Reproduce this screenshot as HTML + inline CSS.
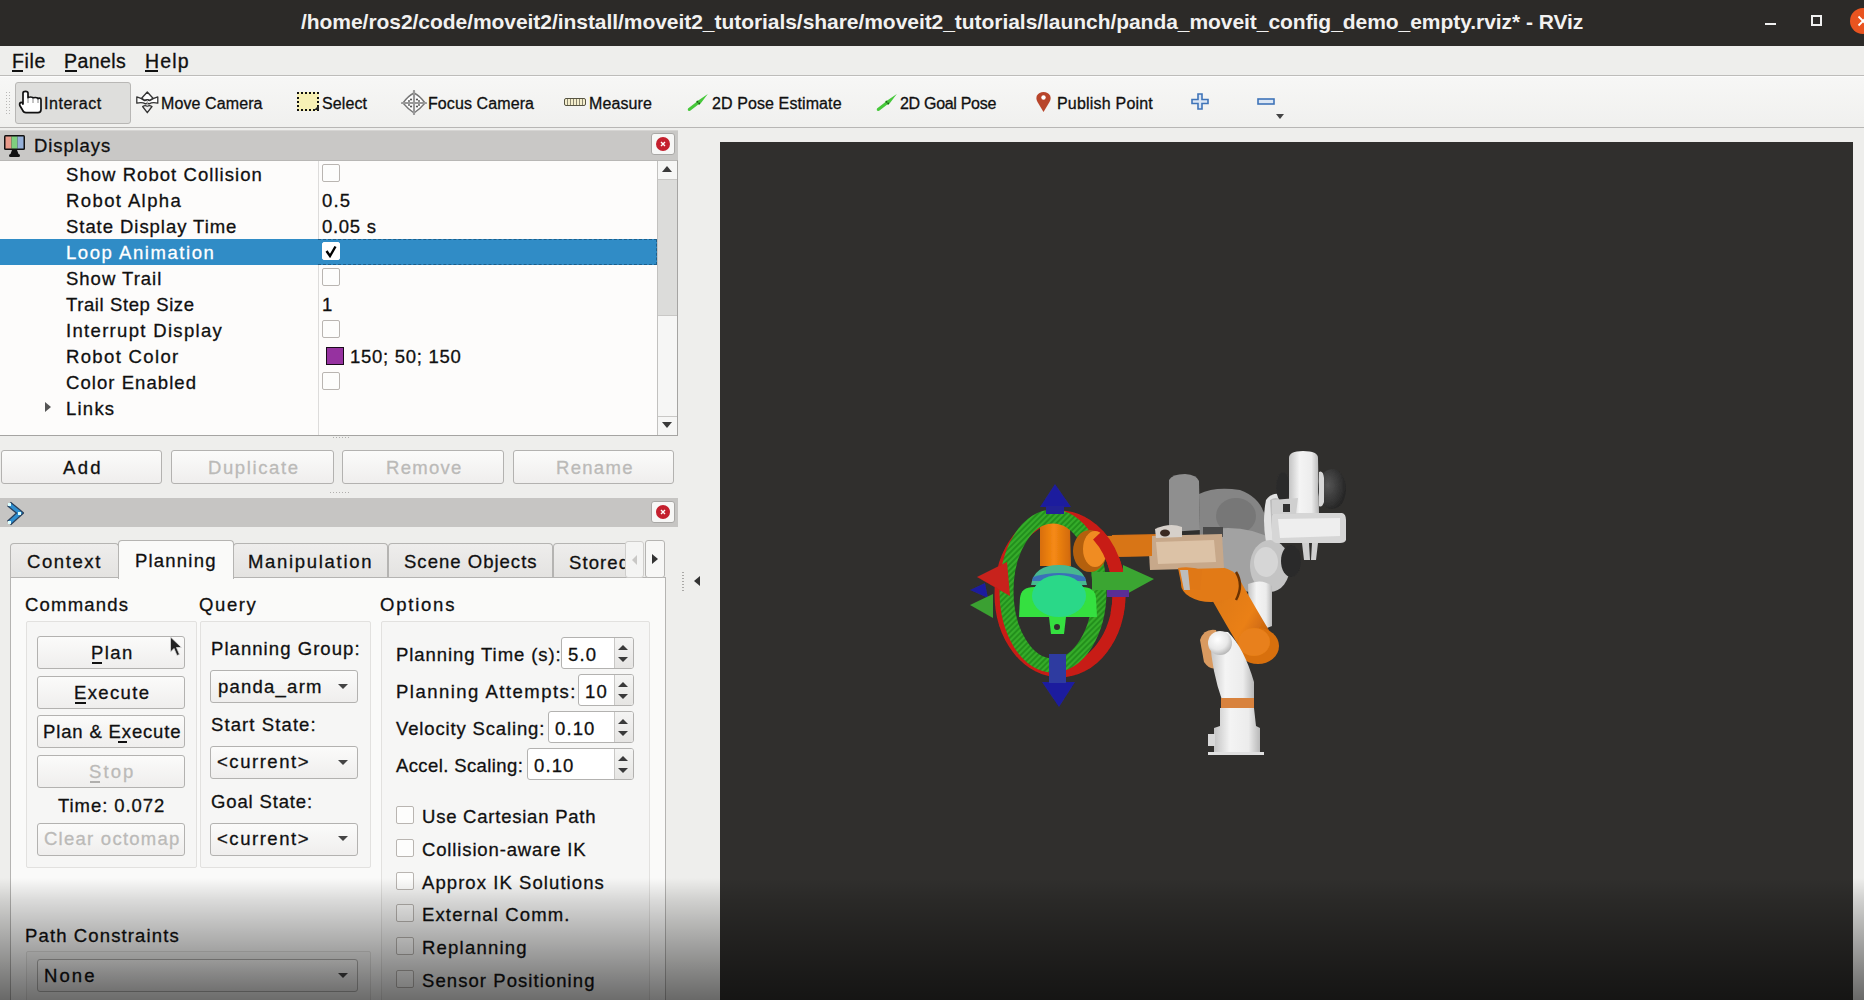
<!DOCTYPE html>
<html><head><meta charset="utf-8">
<style>
*{box-sizing:border-box;margin:0;padding:0}
html,body{width:1864px;height:1000px;overflow:hidden;background:#eeeeec;font-family:"Liberation Sans",sans-serif;color:#101010}
.a{position:absolute}
.t{position:absolute;white-space:pre;line-height:1;-webkit-text-stroke:0.3px currentColor}
#title{left:0;top:0;width:1864px;height:46px;background:#2c2a28}
#menubar{left:0;top:46px;width:1864px;height:30px;background:#eeeeec;border-bottom:1px solid #bdbcba}
#toolbar{left:0;top:76px;width:1864px;height:52px;background:linear-gradient(#f7f7f6,#f0f0ee);box-shadow:inset 0 1px #fcfcfc;border-bottom:1px solid #b7b6b4}
.m{font-size:19.5px}
.m u{text-decoration:none;border-bottom:2px solid #111;}
.tb{font-size:16px;letter-spacing:0.1px}
.btn{position:absolute;border:1px solid #b3b2b0;border-radius:3px;background:linear-gradient(#fbfbfa,#efeeed);}
.lbl{font-size:18.5px;letter-spacing:1.1px}
.cb{position:absolute;width:18px;height:18px;border:1px solid #b9b5b1;border-radius:2px;background:#fdfdfc}
.dis{color:#bbbab8}
</style></head><body>
<!-- title bar -->
<div id="title" class="a">
  <div class="t" style="left:301px;top:11px;font-size:21px;font-weight:bold;color:#f2f1f0;letter-spacing:-0.05px;-webkit-text-stroke:0">/home/ros2/code/moveit2/install/moveit2_tutorials/share/moveit2_tutorials/launch/panda_moveit_config_demo_empty.rviz* - RViz</div>
  <div class="a" style="left:1765px;top:23px;width:11px;height:2px;background:#f0f0f0"></div>
  <div class="a" style="left:1811px;top:15px;width:11px;height:11px;border:2px solid #f0f0f0"></div>
  <div class="a" style="left:1850px;top:8px;width:26px;height:26px;border-radius:13px;background:#e95420"></div><svg class="a" style="left:1857px;top:15px" width="12" height="12" viewBox="0 0 12 12"><path d="M1.5 1.5 L10.5 10.5 M10.5 1.5 L1.5 10.5" stroke="#fff" stroke-width="1.8"/></svg>
</div>
<!-- menubar -->
<div id="menubar" class="a">
  <div class="t m" style="left:12px;top:6px;letter-spacing:0.6px">File</div><div class="a" style="left:12px;top:24px;width:11px;height:2px;background:#111"></div>
  <div class="t m" style="left:64px;top:6px;letter-spacing:0.45px">Panels</div><div class="a" style="left:65px;top:24px;width:12px;height:2px;background:#111"></div>
  <div class="t m" style="left:145px;top:6px;letter-spacing:1.2px">Help</div><div class="a" style="left:145px;top:24px;width:13px;height:2px;background:#111"></div>
</div>
<!-- toolbar -->
<div id="toolbar" class="a">
  <div class="a" style="left:5px;top:15px;width:5px;height:23px;background-image:radial-gradient(circle,#b9b8b6 0.8px,transparent 1px);background-size:3px 3px"></div>
  <div class="a" style="left:15px;top:6px;width:116px;height:42px;border:1px solid #b8b7b5;border-radius:3px;background:#dededc"></div>
  <svg class="a" style="left:18px;top:90px;left:18px;top:14px" width="24" height="26" viewBox="0 0 24 26"><path d="M5 13 L5 3 Q5 1.3 7.5 1.3 Q10 1.3 10 3 L10 7.8 Q10 7 12.5 7 Q15 7 15 8 Q15 7.5 17.5 7.5 Q20 7.5 20 8.8 Q20 8.2 21.5 8.2 Q23 8.2 23 9.8 L23 19.5 Q23 22.7 20 22.7 L8 22.7 Q5.5 22.7 4.5 20 L1.8 15.5 Q1.2 13.2 2.6 12.6 Q4 12 5 14 Z" fill="#fff" stroke="#111" stroke-width="1.7" stroke-linejoin="round"/><path d="M10 8 L10 13 M15 8.5 L15 13 M20 9 L20 13" stroke="#888" stroke-width="1"/></svg>
  <div class="t tb" style="left:44px;top:20px;letter-spacing:0.54px">Interact</div>
  <svg class="a" style="left:136px;top:14px" width="24" height="24" viewBox="0 0 24 24" fill="#fff" stroke="#333" stroke-width="1.3" stroke-linejoin="round"><path d="M11.3 2 L5.6 8.3 Q8 9.6 8.6 10.6 Q11.3 8.8 14 10.6 Q14.6 9.6 17 8.3 Z"/><path d="M0.8 6.9 L0.8 13.2 Q6 11.6 9.5 13.9 Q11.3 12.6 13.1 13.9 Q16.6 11.6 21.8 13.2 L21.8 6.9 Q17.5 8 14 10.6 Q11.3 9.4 8.6 10.6 Q5 8 0.8 6.9 Z"/><path d="M6.6 16.5 L11.3 22.7 L16 16.5 Q13.5 15 11.3 16.2 Q9 15 6.6 16.5 Z" fill="#eee"/><path d="M11.3 10 L11.3 16" stroke="#aaa" stroke-width="1"/></svg>
  <div class="t tb" style="left:161px;top:20px">Move Camera</div>
  <div class="a" style="left:297px;top:16px;width:22px;height:19px;background:#f7f0b5;border:2px dotted #111"></div>
  <div class="a" style="left:314px;top:29px;width:0;height:0;border-left:5px solid transparent;border-bottom:5px solid #222"></div>
  <div class="t tb" style="left:322px;top:20px">Select</div>
  <svg class="a" style="left:401px;top:14px" width="26" height="25" viewBox="0 0 26 25"><path d="M13 3 Q19 6 24 13 Q19 19 13 23 Q7 19 2 13 Q7 6 13 3 Z" fill="#fff" stroke="#777" stroke-width="1.4"/><path d="M13 1 L13 24 M1 13 L25 13" stroke="#999" stroke-width="2.2" stroke-linecap="round"/><g fill="#555"><circle cx="10" cy="9.5" r="1.1"/><circle cx="16" cy="9.5" r="1.1"/><circle cx="10" cy="16.5" r="1.1"/><circle cx="16" cy="16.5" r="1.1"/><circle cx="8" cy="11" r="0.9"/><circle cx="18" cy="11" r="0.9"/><circle cx="8" cy="15" r="0.9"/><circle cx="18" cy="15" r="0.9"/></g></svg>
  <div class="t tb" style="left:428px;top:20px">Focus Camera</div>
  <div class="a" style="left:564px;top:22px;width:22px;height:8px;background:repeating-linear-gradient(90deg,#f4eecc 0 2px,#8a8670 2px 3px);border:1.5px solid #575442;border-radius:2px"></div>
  <div class="t tb" style="left:589px;top:20px">Measure</div>
  <svg class="a" style="left:686px;top:16px" width="24" height="20" viewBox="0 0 24 20"><path d="M2 16.5 Q1 19.5 4.2 18.8 L12 12.8 Q14.2 12.8 15.2 10.8 L21.8 2 L12.6 8.2 Q10.4 8.2 9.8 10.4 Z" fill="#46c83a"/><circle cx="11.5" cy="9.8" r="0.9" fill="#1c5a18"/><circle cx="13.2" cy="11.5" r="0.9" fill="#1c5a18"/></svg>
  <div class="t tb" style="left:712px;top:20px">2D Pose Estimate</div>
  <svg class="a" style="left:875px;top:16px" width="24" height="20" viewBox="0 0 24 20"><path d="M2 16.5 Q1 19.5 4.2 18.8 L12 12.8 Q14.2 12.8 15.2 10.8 L21.8 2 L12.6 8.2 Q10.4 8.2 9.8 10.4 Z" fill="#46c83a"/><circle cx="11.5" cy="9.8" r="0.9" fill="#1c5a18"/><circle cx="13.2" cy="11.5" r="0.9" fill="#1c5a18"/></svg>
  <div class="t tb" style="left:900px;top:20px;letter-spacing:-0.3px">2D Goal Pose</div>
  <svg class="a" style="left:1035px;top:15px" width="17" height="22" viewBox="0 0 17 22"><path d="M8.5 21 L2.5 11 Q0.5 7.5 2 4.5 Q4 1 8.5 1 Q13 1 15 4.5 Q16.5 7.5 14.5 11 Z" fill="#b8452a"/><circle cx="8.5" cy="6.5" r="2.2" fill="#fff"/></svg>
  <div class="t tb" style="left:1057px;top:20px;letter-spacing:0.2px">Publish Point</div>
  <svg class="a" style="left:1191px;top:17px" width="18" height="17" viewBox="0 0 18 17"><path d="M7 1 H11 V6.5 H17 V10.5 H11 V16 H7 V10.5 H1 V6.5 H7 Z" fill="#dbe6f4" stroke="#3f74b8" stroke-width="1.6"/></svg>
  <svg class="a" style="left:1257px;top:22px" width="18" height="8" viewBox="0 0 18 8"><rect x="1" y="1" width="16" height="5" fill="#dbe6f4" stroke="#3f74b8" stroke-width="1.6"/></svg>
  <div class="a" style="left:1276px;top:38px;width:0;height:0;border-left:4px solid transparent;border-right:4px solid transparent;border-top:5px solid #444"></div>
</div>
<!-- displays dock -->
<div class="a" style="left:0;top:130px;width:678px;height:31px;background:#c9c8c6;border-top:1px solid #d6d5d3"></div>
<svg class="a" style="left:3px;top:134px" width="23" height="24" viewBox="0 0 23 24"><rect x="1" y="1" width="21" height="15" rx="1.5" fill="#111"/><rect x="2.5" y="2.5" width="6" height="12" fill="#e99a8a"/><rect x="8.5" y="2.5" width="6" height="12" fill="#7fcf7f"/><rect x="14.5" y="2.5" width="6" height="12" fill="#95b0d8"/><path d="M9 16 L14 16 L15.5 20 L7.5 20 Z" fill="#111"/><rect x="6" y="20" width="11" height="3" rx="1.5" fill="#111"/></svg>
<div class="t lbl" style="left:34px;top:137px;letter-spacing:0.89px">Displays</div>
<div class="a" style="left:651px;top:133px;width:24px;height:22px;border:1px solid #a9a8a6;border-radius:3px;background:#f7f7f6"></div>
<div class="a" style="left:656px;top:137px;width:14px;height:14px;border-radius:7px;background:#c4202e"></div>
<svg class="a" style="left:659px;top:140px" width="8" height="8" viewBox="0 0 8 8"><path d="M2 2 L6 6 M6 2 L2 6" stroke="#fff" stroke-width="1.4"/></svg>
<div class="a" style="left:0;top:160px;width:678px;height:276px;background:#fdfcfb;border-top:1px solid #b8b7b5;border-bottom:1px solid #a5a4a2;border-right:1px solid #a5a4a2"></div>
<div class="a" style="left:318px;top:161px;width:1px;height:274px;background:#dddcdb"></div>
<div class="a" style="left:0;top:239px;width:657px;height:26px;background:#308cc6"></div>
<div class="a" style="left:318px;top:239px;width:339px;height:26px;border:1px dashed #1d5f8c;border-left:none"></div>
<div class="t lbl" style="left:66px;top:166px;color:#101010;letter-spacing:1.05px">Show Robot Collision</div>
<div class="cb" style="left:322px;top:164px"></div>
<div class="t lbl" style="left:66px;top:192px;color:#101010;letter-spacing:1.4px">Robot Alpha</div>
<div class="t lbl" style="left:322px;top:192px;letter-spacing:1.1px">0.5</div>
<div class="t lbl" style="left:66px;top:218px;color:#101010;letter-spacing:0.95px">State Display Time</div>
<div class="t lbl" style="left:322px;top:218px;letter-spacing:0.7px">0.05 s</div>
<div class="t lbl" style="left:66px;top:244px;color:#fff;letter-spacing:1.56px">Loop Animation</div>
<div class="cb" style="left:322px;top:242px;border-color:#fff;background:#fff"></div><svg class="a" style="left:324px;top:244px" width="14" height="14" viewBox="0 0 14 14"><path d="M2.5 7 L6 12 L11.5 2.5" fill="none" stroke="#000" stroke-width="2.4"/></svg>
<div class="t lbl" style="left:66px;top:270px;color:#101010;letter-spacing:0.99px">Show Trail</div>
<div class="cb" style="left:322px;top:268px"></div>
<div class="t lbl" style="left:66px;top:296px;color:#101010;letter-spacing:0.6px">Trail Step Size</div>
<div class="t lbl" style="left:322px;top:296px">1</div>
<div class="t lbl" style="left:66px;top:322px;color:#101010;letter-spacing:1.32px">Interrupt Display</div>
<div class="cb" style="left:322px;top:320px"></div>
<div class="t lbl" style="left:66px;top:348px;color:#101010;letter-spacing:1.35px">Robot Color</div>
<div class="a" style="left:326px;top:347px;width:18px;height:18px;background:#9632a0;border:1.5px solid #1a0a1a"></div>
<div class="t lbl" style="left:350px;top:348px;letter-spacing:0.71px">150; 50; 150</div>
<div class="t lbl" style="left:66px;top:374px;color:#101010;letter-spacing:1.06px">Color Enabled</div>
<div class="cb" style="left:322px;top:372px"></div>
<div class="t lbl" style="left:66px;top:400px;color:#101010;letter-spacing:1.23px">Links</div>
<div class="a" style="left:45px;top:402px;width:0;height:0;border-top:5px solid transparent;border-bottom:5px solid transparent;border-left:6px solid #555"></div>
<!-- scrollbar -->
<div class="a" style="left:657px;top:161px;width:20px;height:274px;background:#f6f6f5;border-left:1px solid #c2c1bf"></div>
<div class="a" style="left:658px;top:179px;width:19px;height:137px;background:#dcdcda;border-top:1px solid #c9c8c6;border-bottom:1px solid #c9c8c6"></div>
<div class="a" style="left:658px;top:416px;width:19px;height:1px;background:#c9c8c6"></div>
<div class="a" style="left:662px;top:166px;width:0;height:0;border-left:5px solid transparent;border-right:5px solid transparent;border-bottom:6px solid #3a3a3a"></div>
<div class="a" style="left:662px;top:422px;width:0;height:0;border-left:5px solid transparent;border-right:5px solid transparent;border-top:6px solid #3a3a3a"></div>
<div class="a" style="left:332px;top:436px;width:18px;height:3px;background-image:radial-gradient(circle,#b0afad 0.7px,transparent 0.9px);background-size:3px 3px"></div>
<!-- buttons -->
<div class="btn" style="left:1px;top:450px;width:161px;height:34px"></div>
<div class="t lbl" style="left:63px;top:459px;letter-spacing:2.3px">Add</div>
<div class="btn" style="left:171px;top:450px;width:163px;height:34px"></div>
<div class="t lbl dis" style="left:208px;top:459px;letter-spacing:1.6px">Duplicate</div>
<div class="btn" style="left:342px;top:450px;width:162px;height:34px"></div>
<div class="t lbl dis" style="left:386px;top:459px;letter-spacing:1.3px">Remove</div>
<div class="btn" style="left:513px;top:450px;width:161px;height:34px"></div>
<div class="t lbl dis" style="left:556px;top:459px;letter-spacing:1.3px">Rename</div>
<div class="a" style="left:329px;top:491px;width:22px;height:3px;background-image:radial-gradient(circle,#b0afad 0.7px,transparent 0.9px);background-size:3px 3px"></div>
<!-- motion planning dock -->
<div class="a" style="left:0;top:498px;width:678px;height:29px;background:#c6c5c3"></div>
<svg class="a" style="left:6px;top:501px" width="18" height="25" viewBox="0 0 18 25"><path d="M3 3 L14 12 L3 22" fill="none" stroke="#2a3f5a" stroke-width="6" stroke-linejoin="miter"/><path d="M3 3 L14 12 L3 22" fill="none" stroke="#2f8fd0" stroke-width="3.5"/><rect x="2" y="2" width="3" height="3" fill="#dff"/><rect x="2" y="20" width="3" height="3" fill="#dff"/><rect x="12" y="11" width="3" height="3" fill="#dff"/></svg>
<div class="a" style="left:651px;top:501px;width:24px;height:22px;border:1px solid #a9a8a6;border-radius:3px;background:#f7f7f6"></div>
<div class="a" style="left:656px;top:505px;width:14px;height:14px;border-radius:7px;background:#c4202e"></div>
<svg class="a" style="left:659px;top:508px" width="8" height="8" viewBox="0 0 8 8"><path d="M2 2 L6 6 M6 2 L2 6" stroke="#fff" stroke-width="1.4"/></svg>
<!-- tabs -->
<div class="a" style="left:10px;top:577px;width:656px;height:430px;background:#fafaf9;border:1px solid #b5b4b2"></div>
<div class="a" style="left:10px;top:543px;width:109px;height:34px;background:linear-gradient(#eeedec,#e4e3e1);border:1px solid #b5b4b2;border-bottom:none;border-radius:4px 4px 0 0"></div>
<div class="a" style="left:233px;top:543px;width:155px;height:34px;background:linear-gradient(#eeedec,#e4e3e1);border:1px solid #b5b4b2;border-bottom:none;border-radius:4px 4px 0 0"></div>
<div class="a" style="left:388px;top:543px;width:165px;height:34px;background:linear-gradient(#eeedec,#e4e3e1);border:1px solid #b5b4b2;border-bottom:none;border-radius:4px 4px 0 0"></div>
<div class="a" style="left:553px;top:543px;width:90px;height:34px;background:linear-gradient(#eeedec,#e4e3e1);border:1px solid #b5b4b2;border-bottom:none;border-radius:4px 4px 0 0;overflow:hidden"><div class="t lbl" style="left:15px;top:10px">Stored</div></div>
<div class="a" style="left:118px;top:540px;width:116px;height:39px;background:#fafaf9;border:1px solid #b5b4b2;border-bottom:none;border-radius:4px 4px 0 0"></div>
<div class="t lbl" style="left:27px;top:553px;letter-spacing:1.6px">Context</div>
<div class="t lbl" style="left:135px;top:552px;letter-spacing:1.21px">Planning</div>
<div class="t lbl" style="left:248px;top:553px;letter-spacing:1.69px">Manipulation</div>
<div class="t lbl" style="left:404px;top:553px;letter-spacing:1.02px">Scene Objects</div>
<div class="a" style="left:625px;top:541px;width:19px;height:37px;background:#f4f4f3;border:1px solid #cfcecc;border-radius:3px"></div>
<div class="a" style="left:632px;top:555px;width:0;height:0;border-top:5px solid transparent;border-bottom:5px solid transparent;border-right:5px solid #c9c8c6"></div>
<div class="a" style="left:645px;top:540px;width:20px;height:38px;background:#f7f7f6;border:1px solid #b5b4b2;border-radius:3px"></div>
<div class="a" style="left:652px;top:554px;width:0;height:0;border-top:5px solid transparent;border-bottom:5px solid transparent;border-left:6px solid #333"></div>
<div class="a" style="left:682px;top:571px;width:2px;height:22px;background-image:radial-gradient(circle,#aaa9a7 0.7px,transparent 0.9px);background-size:2px 3px"></div>
<div class="a" style="left:694px;top:576px;width:0;height:0;border-top:5px solid transparent;border-bottom:5px solid transparent;border-right:6px solid #333"></div>
<!-- planning tab contents -->
<div class="t lbl" style="left:25px;top:596px;letter-spacing:1.21px">Commands</div>
<div class="t lbl" style="left:199px;top:596px;letter-spacing:1.6px">Query</div>
<div class="t lbl" style="left:380px;top:596px;letter-spacing:1.77px">Options</div>
<div class="a" style="left:26px;top:621px;width:171px;height:247px;border:1px solid #e2e1df;border-radius:2px;background:#f6f6f5"></div>
<div class="a" style="left:200px;top:621px;width:171px;height:247px;border:1px solid #e2e1df;border-radius:2px;background:#f6f6f5"></div>
<div class="a" style="left:381px;top:621px;width:269px;height:400px;border:1px solid #e2e1df;border-radius:2px;background:#f6f6f5"></div>
<div class="btn" style="left:37px;top:636px;width:148px;height:33px"></div>
<div class="t lbl" style="left:91px;top:644px;letter-spacing:1.43px">Plan</div><div class="a" style="left:92px;top:662px;width:10px;height:2px;background:#111"></div>
<div class="btn" style="left:37px;top:676px;width:148px;height:33px"></div>
<div class="t lbl" style="left:74px;top:684px;letter-spacing:1.35px">Execute</div><div class="a" style="left:75px;top:702px;width:11px;height:2px;background:#111"></div>
<div class="btn" style="left:37px;top:715px;width:148px;height:33px"></div>
<div class="t lbl" style="left:43px;top:723px;letter-spacing:0.85px">Plan &amp; Execute</div><div class="a" style="left:118px;top:741px;width:9px;height:2px;background:#111"></div>
<div class="btn" style="left:37px;top:755px;width:148px;height:33px"></div>
<div class="t lbl dis" style="left:89px;top:763px;letter-spacing:2.1px">Stop</div><div class="a" style="left:90px;top:781px;width:10px;height:2px;background:#b0afad"></div>
<div class="t lbl" style="left:58px;top:797px;letter-spacing:0.93px">Time: 0.072</div>
<div class="btn" style="left:37px;top:823px;width:148px;height:33px"></div>
<div class="t lbl dis" style="left:44px;top:830px;letter-spacing:1.25px">Clear octomap</div>
<svg class="a" style="left:169px;top:636px" width="16" height="22" viewBox="0 0 16 22"><path d="M1.5 1 L1.5 16 L5 12.5 L8 19.5 L10.5 18.5 L7.5 11.5 L12.5 11.5 Z" fill="#222" stroke="#ddd" stroke-width="0.8"/></svg>
<div class="t lbl" style="left:211px;top:640px;letter-spacing:1.06px">Planning Group:</div>
<div class="btn" style="left:210px;top:670px;width:148px;height:33px"></div>
<div class="t lbl" style="left:218px;top:678px;letter-spacing:1.23px">panda_arm</div>
<div class="a" style="left:338px;top:684px;width:0;height:0;border-left:5px solid transparent;border-right:5px solid transparent;border-top:5px solid #444"></div>
<div class="t lbl" style="left:211px;top:716px;letter-spacing:1.1px">Start State:</div>
<div class="btn" style="left:210px;top:746px;width:148px;height:33px"></div>
<div class="t lbl" style="left:217px;top:753px;letter-spacing:1.54px">&lt;current&gt;</div>
<div class="a" style="left:338px;top:760px;width:0;height:0;border-left:5px solid transparent;border-right:5px solid transparent;border-top:5px solid #444"></div>
<div class="t lbl" style="left:211px;top:793px;letter-spacing:0.85px">Goal State:</div>
<div class="btn" style="left:210px;top:823px;width:148px;height:33px"></div>
<div class="t lbl" style="left:217px;top:830px;letter-spacing:1.54px">&lt;current&gt;</div>
<div class="a" style="left:338px;top:836px;width:0;height:0;border-left:5px solid transparent;border-right:5px solid transparent;border-top:5px solid #444"></div>
<div class="t lbl" style="left:396px;top:646px;letter-spacing:0.92px">Planning Time (s):</div>
<div class="a" style="left:561px;top:637px;width:73px;height:32px;border:1px solid #b3b2b0;border-radius:3px;background:#fff"></div>
<div class="a" style="left:614px;top:638px;width:19px;height:30px;background:linear-gradient(#f4f4f3,#e6e5e3);border-left:1px solid #c9c8c6;border-radius:0 2px 2px 0"></div>
<div class="a" style="left:618px;top:645px;width:0;height:0;border-left:5px solid transparent;border-right:5px solid transparent;border-bottom:5px solid #3a3a3a"></div>
<div class="a" style="left:618px;top:657px;width:0;height:0;border-left:5px solid transparent;border-right:5px solid transparent;border-top:5px solid #3a3a3a"></div>
<div class="t lbl" style="left:568px;top:646px">5.0</div>
<div class="t lbl" style="left:396px;top:683px;letter-spacing:1.48px">Planning Attempts:</div>
<div class="a" style="left:578px;top:674px;width:56px;height:32px;border:1px solid #b3b2b0;border-radius:3px;background:#fff"></div>
<div class="a" style="left:614px;top:675px;width:19px;height:30px;background:linear-gradient(#f4f4f3,#e6e5e3);border-left:1px solid #c9c8c6;border-radius:0 2px 2px 0"></div>
<div class="a" style="left:618px;top:682px;width:0;height:0;border-left:5px solid transparent;border-right:5px solid transparent;border-bottom:5px solid #3a3a3a"></div>
<div class="a" style="left:618px;top:694px;width:0;height:0;border-left:5px solid transparent;border-right:5px solid transparent;border-top:5px solid #3a3a3a"></div>
<div class="t lbl" style="left:585px;top:683px">10</div>
<div class="t lbl" style="left:396px;top:720px;letter-spacing:0.85px">Velocity Scaling:</div>
<div class="a" style="left:548px;top:711px;width:86px;height:32px;border:1px solid #b3b2b0;border-radius:3px;background:#fff"></div>
<div class="a" style="left:614px;top:712px;width:19px;height:30px;background:linear-gradient(#f4f4f3,#e6e5e3);border-left:1px solid #c9c8c6;border-radius:0 2px 2px 0"></div>
<div class="a" style="left:618px;top:719px;width:0;height:0;border-left:5px solid transparent;border-right:5px solid transparent;border-bottom:5px solid #3a3a3a"></div>
<div class="a" style="left:618px;top:731px;width:0;height:0;border-left:5px solid transparent;border-right:5px solid transparent;border-top:5px solid #3a3a3a"></div>
<div class="t lbl" style="left:555px;top:720px">0.10</div>
<div class="t lbl" style="left:396px;top:757px;letter-spacing:0.39px">Accel. Scaling:</div>
<div class="a" style="left:527px;top:748px;width:107px;height:32px;border:1px solid #b3b2b0;border-radius:3px;background:#fff"></div>
<div class="a" style="left:614px;top:749px;width:19px;height:30px;background:linear-gradient(#f4f4f3,#e6e5e3);border-left:1px solid #c9c8c6;border-radius:0 2px 2px 0"></div>
<div class="a" style="left:618px;top:756px;width:0;height:0;border-left:5px solid transparent;border-right:5px solid transparent;border-bottom:5px solid #3a3a3a"></div>
<div class="a" style="left:618px;top:768px;width:0;height:0;border-left:5px solid transparent;border-right:5px solid transparent;border-top:5px solid #3a3a3a"></div>
<div class="t lbl" style="left:534px;top:757px">0.10</div>
<div class="cb" style="left:396px;top:806px"></div>
<div class="t lbl" style="left:422px;top:808px;letter-spacing:0.77px">Use Cartesian Path</div>
<div class="cb" style="left:396px;top:839px"></div>
<div class="t lbl" style="left:422px;top:841px;letter-spacing:0.86px">Collision-aware IK</div>
<div class="cb" style="left:396px;top:872px"></div>
<div class="t lbl" style="left:422px;top:874px;letter-spacing:1.07px">Approx IK Solutions</div>
<div class="cb" style="left:396px;top:904px"></div>
<div class="t lbl" style="left:422px;top:906px;letter-spacing:1.14px">External Comm.</div>
<div class="cb" style="left:396px;top:937px"></div>
<div class="t lbl" style="left:422px;top:939px;letter-spacing:1.21px">Replanning</div>
<div class="cb" style="left:396px;top:970px"></div>
<div class="t lbl" style="left:422px;top:972px;letter-spacing:1.07px">Sensor Positioning</div>
<div class="t lbl" style="left:25px;top:927px;letter-spacing:1.13px">Path Constraints</div>
<div class="a" style="left:26px;top:951px;width:345px;height:60px;border:1px solid #e2e1df;border-radius:2px;background:#f6f6f5"></div>
<div class="btn" style="left:37px;top:959px;width:321px;height:33px"></div>
<div class="t lbl" style="left:44px;top:967px;letter-spacing:2.1px">None</div>
<div class="a" style="left:338px;top:973px;width:0;height:0;border-left:5px solid transparent;border-right:5px solid transparent;border-top:5px solid #444"></div>
<!-- 3D view -->
<div class="a" style="left:720px;top:142px;width:1133px;height:858px;background:#302f2d"></div>

<!-- robot -->
<svg class="a" style="left:0;top:0" width="1864" height="1000" viewBox="0 0 1864 1000">
<defs>
<filter id="bl" x="-5%" y="-5%" width="110%" height="110%"><feGaussianBlur stdDeviation="0.6"/></filter>
<linearGradient id="org" x1="0" x2="1" y1="0" y2="0"><stop offset="0" stop-color="#d86e08"/><stop offset="0.45" stop-color="#f68a14"/><stop offset="1" stop-color="#d06808"/></linearGradient>
<linearGradient id="org2" x1="0" x2="1" y1="0" y2="1"><stop offset="0" stop-color="#e07a16"/><stop offset="0.6" stop-color="#ea8018"/><stop offset="1" stop-color="#c8640e"/></linearGradient>
<linearGradient id="wht" x1="0" x2="1" y1="0" y2="0"><stop offset="0" stop-color="#c4c4c4"/><stop offset="0.35" stop-color="#f4f4f4"/><stop offset="0.75" stop-color="#ececec"/><stop offset="1" stop-color="#b8b8b8"/></linearGradient>
<linearGradient id="whtv" x1="0" x2="0" y1="0" y2="1"><stop offset="0" stop-color="#f0f0f0"/><stop offset="1" stop-color="#cfcfcf"/></linearGradient>
<radialGradient id="sph" cx="0.4" cy="0.35" r="0.7"><stop offset="0" stop-color="#ffffff"/><stop offset="0.6" stop-color="#e8e8e8"/><stop offset="1" stop-color="#b0b0b0"/></radialGradient>
<radialGradient id="dsph" cx="0.35" cy="0.4" r="0.7"><stop offset="0" stop-color="#555"/><stop offset="1" stop-color="#222"/></radialGradient>
<pattern id="hatch" width="4" height="4" patternUnits="userSpaceOnUse" patternTransform="rotate(45)"><rect width="4" height="4" fill="#36ac2a"/><rect width="2" height="4" fill="#24901e"/></pattern>
</defs>
<g filter="url(#bl)">
<!-- ghost links (translucent gray) -->
<path d="M1169 480 Q1172 474 1185 474 Q1197 475 1199 481 L1200 530 L1169 532 Z" fill="#8f8f8f"/>
<path d="M1199 494 Q1215 486 1240 490 Q1262 498 1266 520 Q1270 545 1258 560 Q1240 572 1220 566 Q1203 558 1200 540 Z" fill="#858585"/>
<ellipse cx="1236" cy="516" rx="20" ry="18" fill="#777"/>
<ellipse cx="1244" cy="548" rx="12" ry="10" fill="#666"/>
<path d="M1206 530 Q1250 522 1282 545 L1286 580 Q1262 596 1236 590 Q1210 572 1206 550 Z" fill="#a2a2a2"/>
<rect x="1203" y="527" width="20" height="10" fill="#484848"/>
<!-- right robot: white link under hand -->
<path d="M1266 500 Q1274 490 1284 496 L1282 540 L1266 542 Q1262 520 1266 500 Z" fill="#e2e2e2"/>
<path d="M1270 500 Q1276 496 1280 500 L1278 530 L1272 532 Z" fill="#bdbdbd"/>
<ellipse cx="1270" cy="566" rx="20" ry="26" fill="#c4c4c4"/>
<ellipse cx="1266" cy="562" rx="12" ry="15" fill="#d6d6d6"/>
<ellipse cx="1291" cy="561" rx="10" ry="16" fill="#2a2a2a"/>
<path d="M1248 584 Q1262 578 1272 586 L1272 626 Q1260 632 1249 624 Z" fill="url(#wht)"/>
<!-- hand -->
<ellipse cx="1283" cy="487" rx="7" ry="15" fill="#2c2c2c"/>
<path d="M1289 458 Q1289 451 1303 451 Q1318 451 1318 458 L1319 513 L1289 513 Z" fill="url(#wht)"/>
<ellipse cx="1332" cy="489" rx="14" ry="20" fill="url(#dsph)"/>
<path d="M1319 472 Q1323 470 1324 478 L1324 502 Q1322 508 1319 506 Z" fill="#d8d8d8"/>
<path d="M1272 516 Q1272 513 1278 513 L1342 513 Q1346 514 1346 520 L1346 540 Q1345 543 1340 543 L1276 543 Q1272 542 1272 538 Z" fill="#d6d6d6"/>
<path d="M1278 519 L1340 518 L1340 536 L1280 538 Z" fill="#eeeeee"/>
<path d="M1272 500 L1298 498 L1296 514 L1272 514 Z" fill="#cfcfcf"/>
<rect x="1283" y="504" width="7" height="8" fill="#333"/>
<path d="M1302 543 L1309 543 L1310 560 L1304 560 Z M1312 543 L1318 543 L1316 560 L1311 560 Z" fill="#cfcfcf"/>
<!-- orange big link -->
<path d="M1226 590 Q1240 615 1258 645" fill="none" stroke="url(#org2)" stroke-width="34" stroke-linecap="round"/>
<ellipse cx="1258" cy="646" rx="21" ry="18" fill="#d8700e"/>
<ellipse cx="1254" cy="642" rx="16" ry="14" fill="#e8801a"/>
<ellipse cx="1211" cy="584" rx="30" ry="18" fill="#e27a16"/>
<path d="M1236 572 Q1244 585 1236 600" fill="none" stroke="#6a3206" stroke-width="2.5"/>
<!-- shoulder -->
<path d="M1200 640 Q1204 628 1216 630 L1224 660 Q1214 676 1204 662 Z" fill="#d99a60"/>
<path d="M1210 640 Q1214 630 1228 632 Q1244 648 1254 682 L1254 728 L1222 728 L1222 700 Q1212 672 1210 640 Z" fill="url(#wht)"/>
<circle cx="1220" cy="643" r="12" fill="url(#sph)"/>
<rect x="1221" y="698" width="33" height="10" fill="#d8823c"/>
<path d="M1220 708 L1254 708 L1256 726 L1260 728 L1260 752 L1214 752 L1214 728 L1220 726 Z" fill="url(#wht)"/>
<rect x="1208" y="752" width="56" height="3" fill="#e0e0e0"/>
<rect x="1208" y="734" width="7" height="12" fill="#d8d8d8"/>
<!-- ghost translucent hand & orange horizontal link -->
<path d="M1112 535 L1158 534 L1158 556 L1112 557 Z" fill="#d27016"/>
<path d="M1148 536 L1222 534 L1224 568 L1150 570 Z" fill="#c7a88a"/>
<path d="M1156 542 L1214 540 L1216 562 L1158 564 Z" fill="#dcc2a6"/>
<path d="M1155 529 Q1170 522 1182 527 L1182 537 L1156 538 Z" fill="#d6d0ca"/>
<ellipse cx="1165" cy="533" rx="5" ry="3.5" fill="#3a2a24"/>
<path d="M1178 568 Q1190 566 1202 570 L1200 590 L1182 588 Z" fill="#e07818"/>
<path d="M1180 570 L1188 570 L1190 590 L1184 590 Z" fill="#bdbdbd"/>
<!-- red ring -->
<ellipse cx="1060" cy="594" rx="59" ry="77" fill="none" stroke="#c81c14" stroke-width="13"/>
<!-- orange links near marker -->
<path d="M1040 528 Q1040 523 1055 523 Q1070 523 1070 528 L1071 566 L1040 566 Z" fill="url(#org)"/>
<!-- green ring -->
<ellipse cx="1053" cy="591" rx="46.5" ry="74.5" fill="none" stroke="url(#hatch)" stroke-width="14"/>
<ellipse cx="1090" cy="551" rx="17" ry="21" fill="#b4600e"/>
<ellipse cx="1095" cy="549" rx="12" ry="18" fill="#f08c22"/>
<path d="M1104 536 L1152 535 L1152 556 L1104 557 Z" fill="#d87418"/>
<path d="M1097.9 535 A59 77 0 0 1 1117 614" fill="none" stroke="#c81c14" stroke-width="13"/>
<!-- arrows -->
<path d="M1055 484 L1040 507 L1071 507 Z" fill="#1e1e9e"/>
<rect x="1046" y="506" width="18" height="8" fill="#222296"/>
<path d="M1042 682 L1075 682 L1059 707 Z" fill="#1e1e9e"/>
<rect x="1049" y="654" width="17" height="29" fill="#2e3aa0"/>
<path d="M977 577 L1007 562 L1010 596 Z" fill="#c8201a"/>
<path d="M970 590 L985 583 L988 598 Z" fill="#1e1e9e"/>
<path d="M970 605 L993 594 L993 618 Z" fill="#3aa030"/>
<path d="M1092 572 L1123 572 L1123 565 L1154 579 L1123 596 L1123 590 L1092 590 Z" fill="#3aa530"/>
<rect x="1107" y="590" width="22" height="7" fill="#5a2e96"/>
<!-- gripper -->
<path d="M1031 585 Q1034 565 1059 565 Q1084 565 1087 585 Z" fill="#46b890"/>
<path d="M1033 577 Q1059 569 1085 577 L1086 581 L1032 581 Z" fill="#3a70b8"/>
<path d="M1019 617 L1020 598 Q1021 587 1034 587 L1082 587 Q1095 587 1096 598 L1097 617 Z" fill="#34e040"/>
<ellipse cx="1059" cy="596" rx="27" ry="21" fill="#2ad888"/>
<path d="M1049 617 L1066 617 L1064 634 L1051 634 Z" fill="#34e040"/>
<circle cx="1057" cy="627" r="3" fill="#302f2d"/>
</g>
</svg>
<!-- bottom shadow overlay -->
<div class="a" style="left:0;top:874px;width:1864px;height:126px;background:linear-gradient(rgba(0,0,0,0) 3%,rgba(0,0,0,0.125) 20.6%,rgba(0,0,0,0.24) 40.5%,rgba(0,0,0,0.345) 60%,rgba(0,0,0,0.455) 80%,rgba(0,0,0,0.56))"></div>
</body></html>
